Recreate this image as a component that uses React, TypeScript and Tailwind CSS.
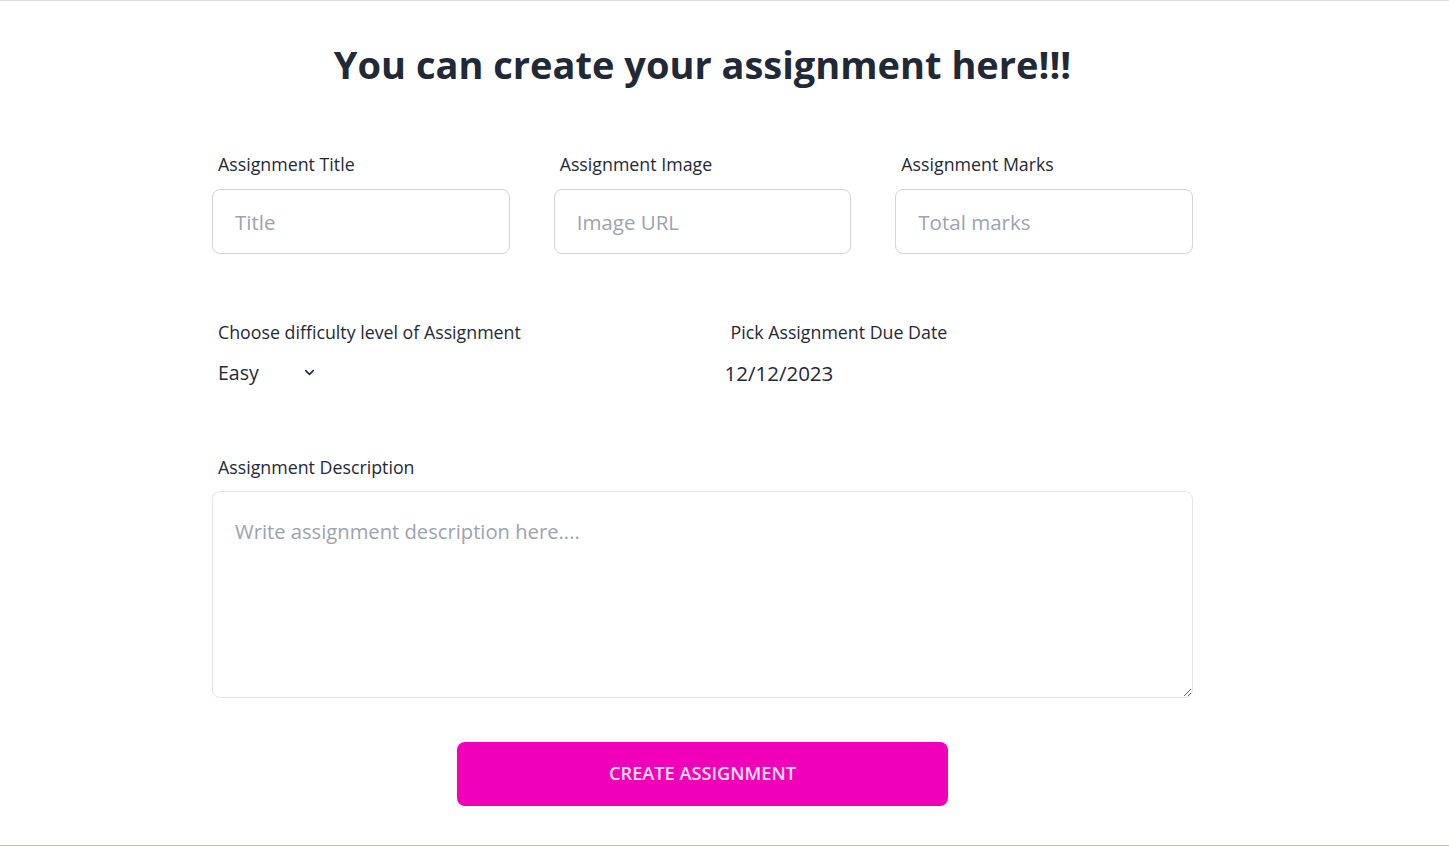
import { ChevronDown } from 'lucide-react';

const font = { fontFamily: '"Open Sans", "Noto Sans", "Liberation Sans", sans-serif' };

const Field = ({ label, placeholder }: { label: string; placeholder: string }) => (
  <div className="flex flex-col">
    <label className="pl-[6px] text-[17.8px] leading-7 text-[#1f2937]">{label}</label>
    <input
      placeholder={placeholder}
      className="mt-[11px] h-[65px] w-full rounded-lg border border-[#d4d4d4] bg-white px-[22px] text-[20.5px] text-[#1f2937] placeholder:text-[#9ca3af] outline-none"
    />
  </div>
);

export default function App() {
  return (
    <div className="h-[846px] w-full border-t border-b border-t-[#dcdcdc] border-b-[#b7c2b3] bg-white" style={font}>
      <div className="w-[1405px]">
        <h1 className="pt-[39px] text-center text-[38px] font-bold leading-[48px] text-[#1f2937]">
          You can create your assignment here!!!
        </h1>

        <form className="mx-auto mt-[62px] w-[981px]">
          <div className="grid grid-cols-3 gap-x-[44px]">
            <Field label="Assignment Title" placeholder="Title" />
            <Field label="Assignment Image" placeholder="Image URL" />
            <Field label="Assignment Marks" placeholder="Total marks" />
          </div>

          <div className="mt-[64px] grid grid-cols-2 gap-x-[44px]">
            <div className="flex flex-col">
              <label className="pl-[6px] text-[17.8px] leading-7 text-[#1f2937]">
                Choose difficulty level of Assignment
              </label>
              <div className="relative mt-[7px] w-[110px]">
                <select className="h-10 w-full appearance-none bg-transparent pl-[6px] text-[19.5px] text-[#1f2937] outline-none">
                  <option>Easy</option>
                  <option>Medium</option>
                  <option>Hard</option>
                </select>
                <ChevronDown
                  size={15}
                  strokeWidth={2.5}
                  className="pointer-events-none absolute right-[5px] top-[12px] text-[#1f2937]"
                />
              </div>
            </div>
            <div className="flex flex-col">
              <label className="pl-[6px] text-[17.8px] leading-7 text-[#1f2937]">Pick Assignment Due Date</label>
              <input
                defaultValue="12/12/2023"
                className="mt-[7px] h-10 w-[200px] bg-transparent text-[20.5px] text-[#1f2937] outline-none"
              />
            </div>
          </div>

          <div className="mt-[60px] flex flex-col">
            <label className="pl-[6px] text-[17.8px] leading-7 text-[#1f2937]">Assignment Description</label>
            <textarea
              placeholder="Write assignment description here...."
              className="mt-[10px] h-[207px] w-full rounded-lg border border-[#e5e5e5] bg-white px-[22px] py-[25px] text-[20.2px] leading-[28px] text-[#1f2937] placeholder:text-[#9ca3af] outline-none"
            />
          </div>

          <div className="mt-[44px] flex justify-center">
            <button
              type="button"
              className="h-[64px] w-[491px] rounded-lg bg-[#f000b8] text-[18.2px] font-semibold uppercase text-[#ffe0f6]"
            >
              Create Assignment
            </button>
          </div>
        </form>
      </div>
    </div>
  );
}
